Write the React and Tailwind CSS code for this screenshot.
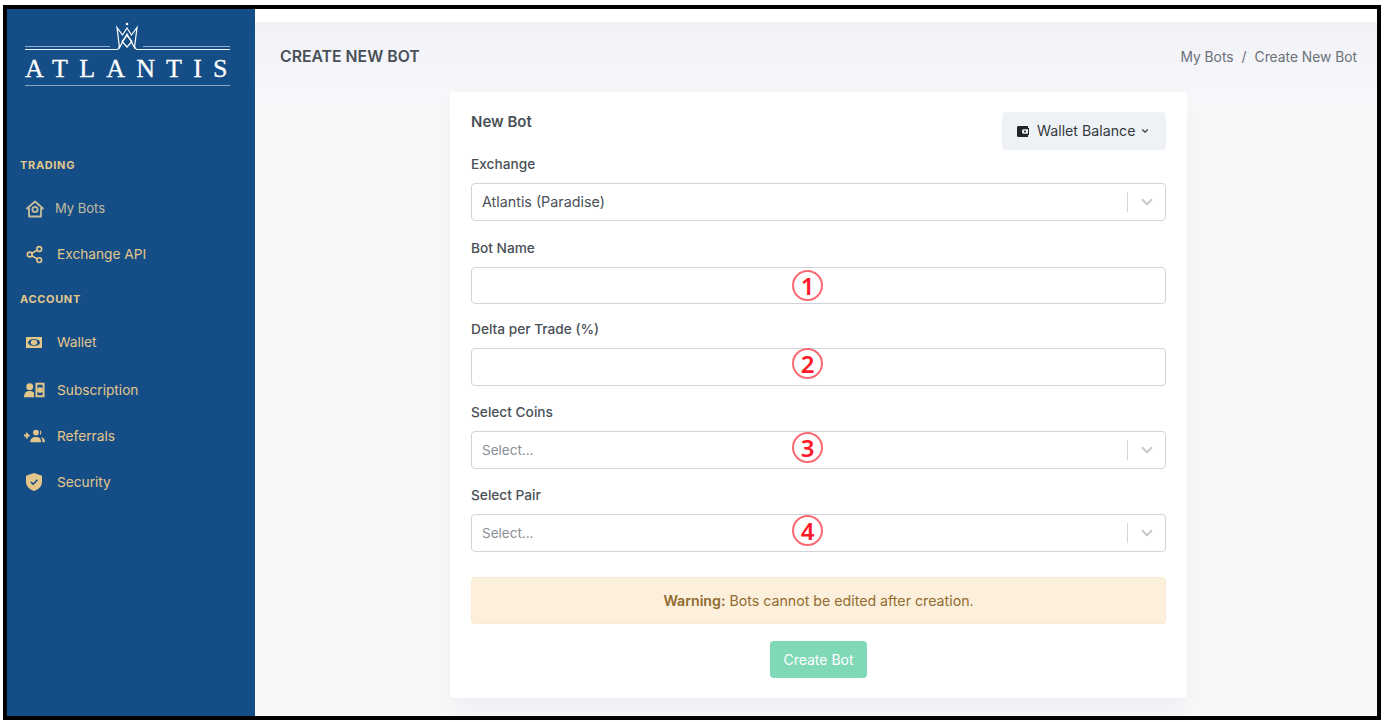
import React from 'react';
import { Share2, ChevronDown } from 'lucide-react';

const Poppins = 'font-["Inter","Noto_Sans",sans-serif]';

function Logo() {
    return (
        <div className="ml-[18px] w-[205px] pt-[13px]">
            <svg viewBox="0 0 205 28" className="block w-[205px] h-[28px] text-white" fill="none" stroke="currentColor">
                <path d="M0 24.5H85M118 24.5H205" strokeWidth="0.8" opacity="0.7" />
                <path d="M0 27.5H92.5L95 24M109 24L111.5 27.5H205" strokeWidth="1.2" opacity="0.95" />
                <path d="M92 5.5L94.5 25.5L102 12L109.5 25.5L112 5.5L106.5 13L102 6L97.5 13Z" strokeWidth="1.2" />
                <path d="M102 13.5L107 19.5L102 25L97 19.5Z" strokeWidth="1.2" />
                <circle cx="102" cy="2" r="1.3" fill="currentColor" stroke="none" />
            </svg>
            <div className="font-['Liberation_Serif',serif] text-[26px] leading-[32px] text-white tracking-[0.43em] whitespace-nowrap mt-[3px] [-webkit-text-stroke:0.3px_white]">ATLANTIS</div>
            <div className="h-px bg-white/50" />
        </div>
    );
}

function HomeIcon() {
    return (
        <svg viewBox="0 0 20 20" className="w-[20px] h-[20px]" fill="none" stroke="currentColor" strokeWidth="1.8" strokeLinejoin="round">
            <path d="M2 9.5L10 2.5L18 9.5H16V17.5H4V9.5Z" />
            <circle cx="10" cy="10.5" r="2.6" />
        </svg>
    );
}

function BillIcon() {
    return (
        <svg viewBox="0 0 16 11" className="w-[16px] h-[11px]">
            <rect width="16" height="11" fill="currentColor" />
            <ellipse cx="8" cy="5.5" rx="6" ry="3.6" fill="#154d87" />
            <ellipse cx="8" cy="5.5" rx="3.2" ry="2.8" fill="currentColor" />
        </svg>
    );
}

function SubscriptionIcon() {
    return (
        <svg viewBox="0 0 22 16" className="w-[21px] h-[16px]" fill="currentColor">
            <circle cx="6" cy="4.5" r="3.6" />
            <path d="M0 15.5C0 11 2.5 9 6 9C8 9 9.5 9.6 10.5 10.8V15.5Z" />
            <path fillRule="evenodd" d="M12 0.5H21.5V15.5H12ZM14 2.5V13.5H19.5V2.5ZM16.75 5A3 3 0 1 1 16.75 11A3 3 0 1 1 16.75 5Z" />
        </svg>
    );
}

function ReferralIcon() {
    return (
        <svg viewBox="0 0 22 14" className="w-[21px] h-[14px]" fill="currentColor">
            <path d="M2 5.5H0V7.5H2V9.5H4V7.5H6V5.5H4V3.5H2Z" />
            <circle cx="12.5" cy="3.4" r="3" />
            <path d="M6.5 13.5C6.5 9.8 9 8 12.5 8C16 8 18 9.8 18 13.5Z" />
            <path d="M16.3 0.6A3 3 0 0 1 16.3 6.2C17.2 5 17.2 1.8 16.3 0.6Z" />
            <path d="M17.6 8C20 8.4 22 10 22 13.5H19.4C19.4 11.2 18.8 9.4 17.6 8Z" />
        </svg>
    );
}

function ShieldIcon() {
    return (
        <svg viewBox="0 0 16 18" className="w-[16px] h-[18px]">
            <path fill="currentColor" d="M8 0L16 2.8V8.5C16 13 12.8 16.6 8 18C3.2 16.6 0 13 0 8.5V2.8Z" />
            <path d="M4.8 9L7.2 11.2L11.4 6.8" fill="none" stroke="#154d87" strokeWidth="1.6" />
        </svg>
    );
}

function WalletIcon() {
    return (
        <svg viewBox="0 0 12 11" className="w-[12px] h-[11px]">
            <path fillRule="evenodd" fill="#212529" d="M1.5 0H11V2H12V9H11V11H1.5C0.7 11 0 10.3 0 9.5V1.5C0 0.7 0.7 0 1.5 0ZM6.5 3.2C5.6 3.2 5 4 5 5.5C5 7 5.6 7.8 6.5 7.8H11V3.2ZM8 4.4A1.1 1.1 0 1 1 8 6.6A1.1 1.1 0 1 1 8 4.4Z" />
        </svg>
    );
}

const NAV = [
    { type: 'head', label: 'TRADING', cls: 'mt-[58px]' },
    { label: 'My Bots', icon: <HomeIcon />, cls: 'mt-[2px] pl-[18px] gap-[10px] text-[13px] text-[#c3bd9f]' },
    { label: 'Exchange API', icon: <Share2 size={19} strokeWidth={2} />, cls: 'mt-[3px] pl-[18px] gap-[13px]' },
    { type: 'head', label: 'ACCOUNT', cls: 'mt-[3px]' },
    { label: 'Wallet', icon: <BillIcon />, cls: 'mt-[1px] pl-[19px] gap-[15px]' },
    { label: 'Subscription', icon: <SubscriptionIcon />, cls: 'mt-[6px] pl-[17px] gap-[12px]' },
    { label: 'Referrals', icon: <ReferralIcon />, cls: 'mt-[4px] pl-[17px] gap-[12px]' },
    { label: 'Security', icon: <ShieldIcon />, cls: 'mt-[4px] pl-[19px] gap-[15px]' },
];

function Sidebar() {
    return (
        <aside className="w-[248px] shrink-0 bg-[#154d87] text-[#e3c78a]">
            <Logo />
            {NAV.map(item => item.type === 'head' ? (
                <div key={item.label} className={`${item.cls} h-[42px] pl-[13px] flex items-center text-[11px] font-bold tracking-[0.06em]`}>{item.label}</div>
            ) : (
                <div key={item.label} className={`text-[13.7px] ${item.cls} h-[42px] flex items-center`}>
                    <span className="flex justify-center shrink-0">{item.icon}</span>
                    <span>{item.label}</span>
                </div>
            ))}
        </aside>
    );
}

// red numbered marks drawn over the form fields
function Mark({ n, cls }) {
    return (
        <span className={`absolute left-[320px] ${cls} w-[31px] h-[31px] rounded-full border-2 border-[#fa6a72] flex items-center justify-center font-['Noto_Sans',sans-serif] text-[#ff1a2a] text-[24px] font-semibold leading-none`}>{n}</span>
    );
}

function Label({ children, cls }) {
    return <div className={`text-[13.7px] font-medium text-[#495057] leading-[20px] ${cls}`}>{children}</div>;
}

function SelectBox({ value, placeholder, mark, cls }) {
    return (
        <div className={`relative h-[38px] rounded-[4px] border border-[#ced4da] bg-white flex items-center pl-[10px] ${cls}`}>
            <span className={value ? 'text-[14.3px] text-[#495057] flex-1' : 'text-[13.5px] text-[#8a8f96] flex-1'}>{value || placeholder}</span>
            <span className="w-px h-[20px] bg-[#d4d6d9]" />
            <span className="w-[37px] flex justify-center text-[#c4c6c9]"><ChevronDown size={18} strokeWidth={2.4} /></span>
            {mark && <Mark n={mark} cls="top-0" />}
        </div>
    );
}

function TextBox({ mark, cls, markCls }) {
    return (
        <div className={`relative rounded-[4px] border border-[#ced4da] bg-white ${cls}`}>
            <Mark n={mark} cls={markCls} />
        </div>
    );
}

function BotForm() {
    return (
        <div className="w-[737px] h-[606px] ml-[195px] bg-white rounded-[4px] shadow-[0_12px_24px_rgba(18,38,63,0.04)] px-[21px] pt-[20px]">
            <div className="flex justify-between items-start h-[38px]">
                <h2 className="mt-[1px] text-[15px] font-semibold text-[#495057] leading-[18px]">New Bot</h2>
                <button className="w-[164px] h-[38px] rounded-[4px] bg-[#eef1f6] text-[#343a40] text-[14.2px] flex items-center pl-[15px] gap-[8px]">
                    <WalletIcon />
                    <span className="flex items-center gap-[5px]">Wallet Balance <ChevronDown size={10} strokeWidth={2.6} /></span>
                </button>
            </div>
            <Label cls="mt-[4px]">Exchange</Label>
            <SelectBox value="Atlantis (Paradise)" cls="mt-[9px]" />
            <Label cls="mt-[17px]">Bot Name</Label>
            <TextBox mark="1" cls="mt-[9px] h-[37px]" markCls="top-[2px]" />
            <Label cls="mt-[15px]">Delta per Trade (%)</Label>
            <TextBox mark="2" cls="mt-[9px] h-[38px]" markCls="-top-px" />
            <Label cls="mt-[16px]">Select Coins</Label>
            <SelectBox placeholder="Select..." mark="3" cls="mt-[9px]" />
            <Label cls="mt-[16px]">Select Pair</Label>
            <SelectBox placeholder="Select..." mark="4" cls="mt-[9px]" />
            <div className="mt-[25px] h-[47px] rounded-[4px] bg-[#fcefdc] border border-[#fbe9d0] flex items-center justify-center text-[14.2px] text-[#916c2e]">
                <span><b className="font-semibold">Warning:</b> Bots cannot be edited after creation.</span>
            </div>
            <div className="flex justify-center mt-[17px]">
                <button className="w-[97px] h-[37px] rounded-[4px] bg-[#7fd9b6] text-white text-[14px]">Create Bot</button>
            </div>
        </div>
    );
}

export default function App() {
    return (
        <div className={`${Poppins} h-[722px] bg-white pt-[5px] px-[3px] pb-[2px] overflow-hidden`}>
            <div className="h-full border-4 border-black flex">
                <Sidebar />
                <main className="flex-1 flex flex-col bg-white min-w-0">
                    <div className="h-[13px] shrink-0" />
                    <div className="flex-1 bg-gradient-to-b from-[#f1f2f6] to-[#f8f8fb] to-[12%]">
                        <div className="h-[70px] pl-[25px] pr-[20px] flex items-center justify-between">
                            <h1 className="text-[15.8px] font-semibold text-[#495057]">CREATE NEW BOT</h1>
                            <div className="text-[13.8px] text-[#6b7079] flex gap-[8px]">
                                <span>My Bots</span><span>/</span><span>Create New Bot</span>
                            </div>
                        </div>
                        <BotForm />
                    </div>
                </main>
            </div>
        </div>
    );
}
